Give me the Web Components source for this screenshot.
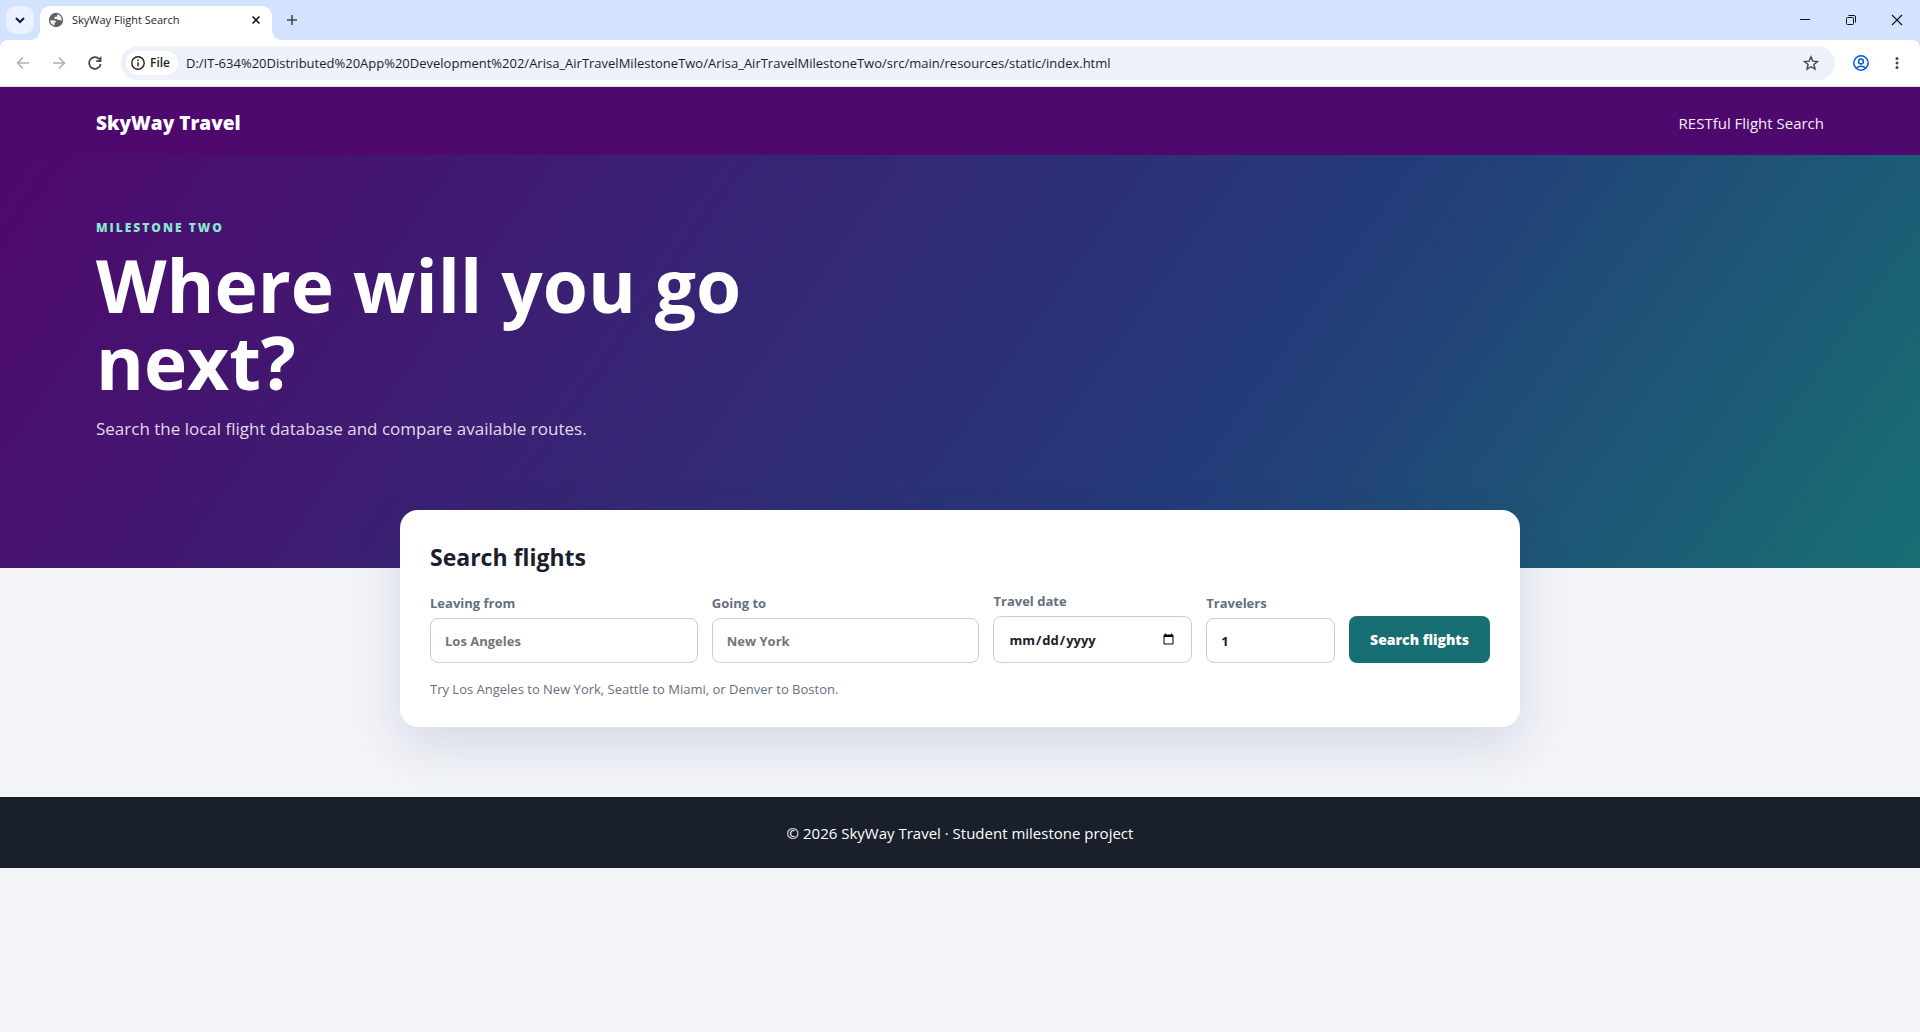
<!DOCTYPE html>
<html lang="en">
<head>
<meta charset="utf-8">
<title>SkyWay Flight Search</title>
<style>
  html, body { margin: 0; min-height: 100vh; }
  body { background: #f2f4f8; color: #19202b; font-family: "Open Sans", "Noto Sans", sans-serif; font-size: 15px; }
</style>
</head>
<body>
<browser-window>
  <sky-header>
    SkyWay Travel
    <span slot="nav">RESTful Flight Search</span>
  </sky-header>
  <main>
    <sky-hero>
      <span slot="eyebrow">Milestone Two</span>
      <span slot="title">Where will you go next?</span>
      Search the local flight database and compare available routes.
    </sky-hero>
    <flight-search>Try Los Angeles to New York, Seattle to Miami, or Denver to Boston.</flight-search>
  </main>
  <sky-footer>© 2026 SkyWay Travel · Student milestone project</sky-footer>
</browser-window>

<script>
function define(name, html, setup) {
  const template = document.createElement('template');
  template.innerHTML = '<style>:host,*{box-sizing:border-box}</style>' + html;
  customElements.define(name, class extends HTMLElement {
    constructor() {
      super();
      this.attachShadow({ mode: 'open' }).append(template.content.cloneNode(true));
      if (setup) setup(this, this.shadowRoot);
    }
  });
}

define('icon-button', `
<style>
  :host { display: inline-flex; flex: none; width: 36px; height: 36px; color: #474747; }
  button { all: unset; display: flex; flex: 1; align-items: center; justify-content: center; cursor: pointer; border-radius: 18px; }
</style>
<button><slot></slot></button>`, (host, root) => {
  root.querySelector('button').setAttribute('aria-label', host.getAttribute('label') || '');
});

define('browser-tabs', `
<style>
  :host { display: flex; align-items: flex-end; height: 40px; background: #d3e3fd; }
  .menu { align-self: center; width: 28px; height: 28px; margin: 0 6px; background: #ebf1fe; border-radius: 10px; color: #041e49; }
  .tab { position: relative; display: flex; align-items: center; gap: 8px; width: 232px; height: 34px; padding: 0 6px 6px 8px; background: #fff; border-radius: 10px 10px 0 0; font: 11px/20px "Open Sans", sans-serif; color: #1f1f1f; }
  .tab::before, .tab::after { content: ""; position: absolute; bottom: 0; width: 10px; height: 10px; }
  .tab::before { right: 100%; background: radial-gradient(circle at 0 0, #0000 10px, #fff 10px); }
  .tab::after { left: 100%; background: radial-gradient(circle at 100% 0, #0000 10px, #fff 10px); }
  .name { flex: 1; }
  .close { width: 20px; height: 20px; color: #1f1f1f; }
  .add { width: 40px; height: 40px; }
  .controls { display: flex; margin-left: auto; }
  .controls icon-button { width: 46px; height: 40px; color: #111; }
</style>
<icon-button class="menu" label="Search tabs"><svg width="12" height="12" viewBox="0 0 12 12"><path d="M2 4l4 4 4-4" fill="none" stroke="currentColor" stroke-width="2"/></svg></icon-button>
<div class="tab">
  <svg width="16" height="16" viewBox="0 0 16 16"><circle cx="8" cy="8" r="7.2" fill="#5f6368"/><path d="M2.2 8.2 6.2 8.6c1.4.1 1.8.8 1.8 1.8H6.4v3.2C3.700 12.900 2.200 10.600 2.200 8.200zM9.300 2.300v1.200c0 .8-.6 1.300-1.400 1.300H6.600v1.400c0 .5-.3.700-.8.700h1.500c1.300 0 2.300.300 2.700 1.200h1.700c.8 0 1.300.5 1.500 1.200.3-.6.5-1.300.5-2 0-2.400-1.800-4.500-4.400-5z" fill="#fff" opacity=".93"/></svg>
  <span class="name">SkyWay Flight Search</span>
  <icon-button class="close" label="Close tab"><svg width="10" height="10" viewBox="0 0 10 10"><path d="M1.500 1.500l7 7m0-7l-7 7" stroke="currentColor" stroke-width="1.700"/></svg></icon-button>
</div>
<icon-button class="add" label="New tab"><svg width="12" height="12" viewBox="0 0 12 12"><path d="M6 1v10M1 6h10" stroke="currentColor" stroke-width="1.600"/></svg></icon-button>
<div class="controls">
  <icon-button label="Minimize"><svg width="12" height="12" viewBox="0 0 12 12"><path d="M1 5.500h10" stroke="currentColor"/></svg></icon-button>
  <icon-button label="Restore"><svg width="12" height="12" viewBox="0 0 12 12" fill="none" stroke="currentColor"><rect x="1.500" y="3.500" width="7" height="7" rx="1"/><path d="M3.500 1.500H9A1.500 1.500 0 0 1 10.500 3v5.500"/></svg></icon-button>
  <icon-button label="Close"><svg width="12" height="12" viewBox="0 0 12 12"><path d="M1 1l10 10M11 1L1 11" stroke="currentColor" stroke-width="1.100"/></svg></icon-button>
</div>`);

define('browser-toolbar', `
<style>
  :host { display: block; background: #d3e3fd; }
  .bar { display: flex; align-items: center; height: 47px; padding: 0 5px 1px; background: #fff; border-bottom: 1px solid #dfe1e5; border-radius: 8px 8px 0 0; }
  .off { color: #b0b0b0; }
  .address { display: flex; flex: 1; align-items: center; height: 34px; margin: 0 8px; padding: 0 6px 0 5px; background: #ecf1fa; border-radius: 17px; }
  .chip { all: unset; display: flex; align-items: center; gap: 5px; height: 24px; padding: 0 8px 0 5px; background: #fff; border-radius: 12px; font: 600 12px/24px "Open Sans", sans-serif; color: #1f1f1f; }
  .address input { all: unset; flex: 1; margin-left: 8px; font: 13px/24px "Open Sans", sans-serif; color: #1f1f1f; }
  .profile { color: #0b57d0; }
</style>
<div class="bar">
  <icon-button class="off" label="Back"><svg width="14" height="14" viewBox="0 0 14 14" fill="none" stroke="currentColor" stroke-width="1.600"><path d="M13 7H2M7 1.500L1.500 7 7 12.500"/></svg></icon-button>
  <icon-button class="off" label="Forward"><svg width="14" height="14" viewBox="0 0 14 14" fill="none" stroke="currentColor" stroke-width="1.600"><path d="M1 7h11M7 1.500L12.500 7 7 12.500"/></svg></icon-button>
  <icon-button label="Reload"><svg width="14" height="14" viewBox="0 0 14 14" fill="none" stroke="currentColor" stroke-width="1.700"><path d="M12.700 8A5.800 5.800 0 1 1 11.200 3l1.300 1.400M12.600 .8v4.400H8.200"/></svg></icon-button>
  <div class="address">
    <button class="chip"><svg width="14" height="14" viewBox="0 0 14 14"><circle cx="7" cy="7" r="6.200" fill="none" stroke="currentColor" stroke-width="1.400"/><path d="M7 6.200v4M7 3.600v1.500" stroke="currentColor" stroke-width="1.500"/></svg>File</button>
    <input aria-label="Address" value="D:/IT-634%20Distributed%20App%20Development%202/Arisa_AirTravelMilestoneTwo/Arisa_AirTravelMilestoneTwo/src/main/resources/static/index.html">
    <icon-button label="Bookmark"><svg width="16" height="16" viewBox="0 0 16 16"><path d="M8 1.800l1.800 4.300 4.700.4-3.600 3 1.100 4.600L8 11.700l-4 2.400 1.100-4.600-3.600-3 4.700-.4z" fill="none" stroke="currentColor" stroke-width="1.400"/></svg></icon-button>
  </div>
  <icon-button class="profile" label="Profile"><svg width="16" height="16" viewBox="0 0 16 16" fill="none" stroke="currentColor" stroke-width="1.500"><circle cx="8" cy="8" r="7.200"/><circle cx="8" cy="6.500" r="2.400"/><path d="M3.200 13c2.700-2.400 6.900-2.400 9.600 0"/></svg></icon-button>
  <icon-button label="Menu"><svg width="4" height="14" viewBox="0 0 4 14" fill="currentColor"><circle cx="2" cy="2.500" r="1.500"/><circle cx="2" cy="7" r="1.500"/><circle cx="2" cy="11.500" r="1.500"/></svg></icon-button>
</div>`);

define('browser-window', `
<style>:host { display: block; }</style>
<browser-tabs></browser-tabs>
<browser-toolbar></browser-toolbar>
<slot></slot>`);

define('sky-header', `
<style>
  :host { display: block; background: #4f086d; color: #fff; }
  header { display: flex; align-items: center; justify-content: space-between; height: 68px; padding: 3px 5% 0; }
  strong { font-size: 19px; font-weight: 800; line-height: 28px; }
  nav { font-size: 15px; line-height: 24px; color: #f6effa; }
</style>
<header><strong><slot></slot></strong><nav><slot name="nav"></slot></nav></header>`);

define('sky-hero', `
<style>
  :host { display: block; background: linear-gradient(125deg, #4f086d, #243b79 64%, #176f73); color: #fff; }
  section { padding: 61px 5% 125px; }
  .eyebrow { font-size: 12px; font-weight: 800; line-height: 24px; letter-spacing: 2px; text-transform: uppercase; color: #87e8cf; }
  h1 { max-width: 760px; margin: 6px 0 15px; font-size: 73px; font-weight: 700; line-height: 77px; }
  p { margin: 0; font-size: 17px; line-height: 28px; color: #e2d9ec; }
</style>
<section>
  <div class="eyebrow"><slot name="eyebrow"></slot></div>
  <h1><slot name="title"></slot></h1>
  <p><slot></slot></p>
</section>`);

define('form-field', `
<style>
  :host { display: block; min-width: 0; font-size: 13px; }
  label { display: flex; flex-direction: column; gap: 5px; font-weight: 700; line-height: 20px; color: #647080; }
  input { width: 100%; height: 45px; padding: 0 14px; border: 1px solid #c8ced8; border-radius: 8px; background: #fff; font: inherit; color: #19202b; }
  input::placeholder { color: #757575; }
  input[type=date] { height: 47px; }
</style>
<label><span></span><input></label>`, (host, root) => {
  root.querySelector('span').textContent = host.getAttribute('label');
  const input = root.querySelector('input');
  for (const name of ['type', 'placeholder', 'value', 'min'])
    if (host.hasAttribute(name)) input.setAttribute(name, host.getAttribute(name));
});

define('flight-search', `
<style>
  :host { display: block; position: relative; max-width: 1120px; margin: -58px auto 70px; padding: 31px 30px 28px; background: #fff; border-radius: 18px; box-shadow: 0 18px 50px rgba(35, 55, 110, .14); }
  h2 { margin: 0 0 17px; font-size: 23px; font-weight: 700; line-height: 33px; }
  form { display: grid; grid-template-columns: 268fr 268fr 199fr 129fr 141fr; align-items: end; gap: 14px; }
  button { height: 47px; padding: 0; border: 0; border-radius: 8px; background: #176f73; color: #fff; font: 800 14px/20px "Open Sans", sans-serif; }
  p { margin: 16px 0 0; font-size: 13px; line-height: 20px; color: #647080; }
</style>
<h2>Search flights</h2>
<form>
  <form-field label="Leaving from" type="text" placeholder="Los Angeles"></form-field>
  <form-field label="Going to" type="text" placeholder="New York"></form-field>
  <form-field label="Travel date" type="date"></form-field>
  <form-field label="Travelers" type="number" value="1" min="1"></form-field>
  <button type="button">Search flights</button>
</form>
<p><slot></slot></p>`);

define('sky-footer', `
<style>
  :host { display: block; background: #19202b; color: #fff; }
  footer { padding: 25px 5% 23px; line-height: 23px; font-size: 15px; text-align: center; }
</style>
<footer><slot></slot></footer>`);
</script>
</body>
</html>
